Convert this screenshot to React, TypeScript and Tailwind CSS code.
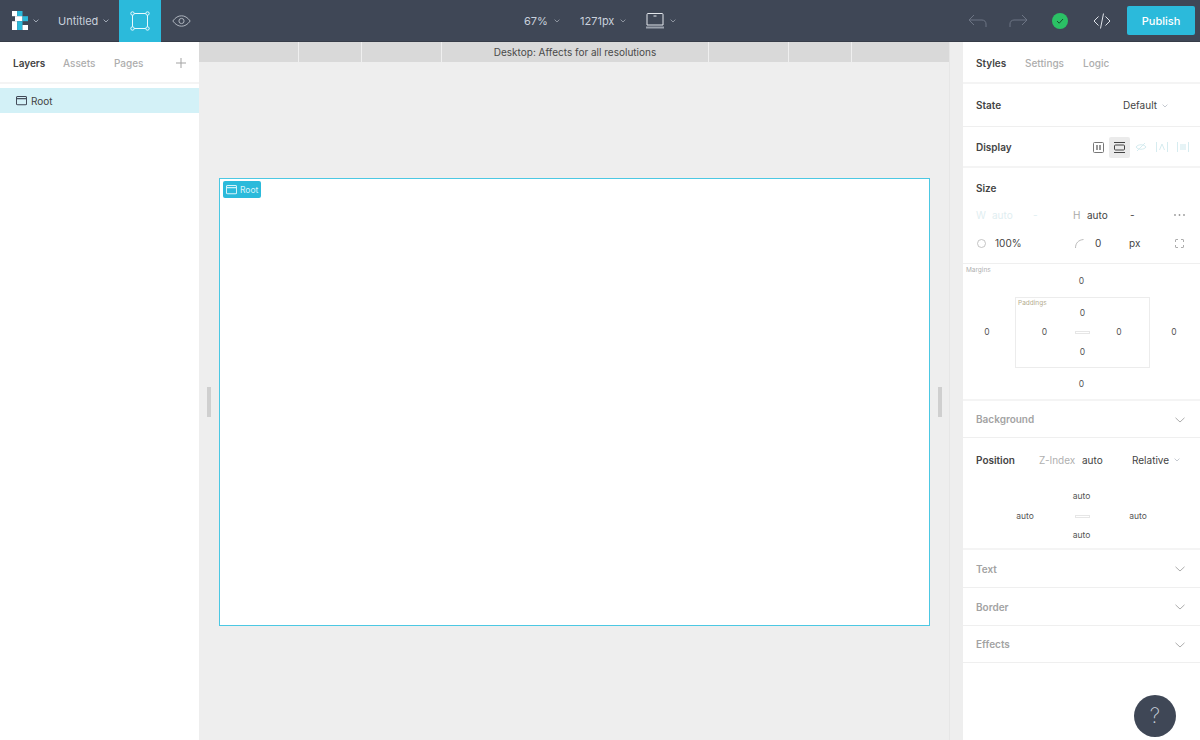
import React from "react";

const Chev = ({ c = "#aeb4bd", w = 7 }: { c?: string; w?: number }) => (
  <svg width={w} height={w * 0.6} viewBox="0 0 10 6" fill="none" stroke={c} strokeWidth="1.2"><path d="M1 1l4 4 4-4" /></svg>
);

const BigChev = () => (
  <svg width="10" height="6" viewBox="0 0 10 6" fill="none" stroke="#a3a3a3" strokeWidth="0.9"><path d="M0.5 0.8L5 5l4.5-4.2" /></svg>
);

const WinIcon = ({ c, s = 11 }: { c: string; s?: number }) => (
  <svg width={s} height={s * 0.85} viewBox="0 0 12 10" fill="none" stroke={c} strokeWidth="1.1"><rect x="0.5" y="0.5" width="11" height="9" rx="1.2" /><path d="M0.5 2.8h11" strokeWidth="1.3" /></svg>
);

const Logo = () => (
  <svg width="16" height="19" viewBox="0 0 16 19">
    <rect x="0" y="0" width="5.2" height="5.2" fill="#fff" />
    <rect x="5.200" y="0" width="5.300" height="5.200" fill="#2bbadb" />
    <rect x="3" y="5.200" width="7.500" height="5" fill="#fff" />
    <rect x="10.500" y="5.200" width="5.500" height="5" fill="#2bbadb" />
    <rect x="0" y="10.200" width="5.200" height="8.800" fill="#fff" />
    <rect x="5.200" y="10.200" width="5.300" height="8.800" fill="#2bbadb" />
    <rect x="10.500" y="14" width="5.500" height="5" fill="#fff" />
  </svg>
);

const Section = ({ title, h }: { title: string; h: string }) => (
  <div className={`flex shrink-0 items-center justify-between border-b border-[#efefef] pl-[13px] pr-[15px] pt-[1px] ${h}`}>
    <span className="text-[10px] font-semibold text-[#a3a3a3]">{title}</span>
    <BigChev />
  </div>
);

const Slot = () => <div className="h-[3px] w-[15px] border border-[#e6e6e6]" />;

export default function App() {
  return (
    <div className="flex h-[740px] w-[1200px] flex-col overflow-hidden bg-white font-['Inter',sans-serif] text-[#444]">
      <header className="flex h-[42px] shrink-0 items-center border-b border-[#363c48] bg-[#3f4756] text-[#c9d1dc]">
        <div className="flex w-[58px] items-center pl-[12px]">
          <Logo />
          <span className="ml-[5px]"><Chev c="#c9d1dc" w={6} /></span>
        </div>
        <div className="flex w-[61px] items-center pt-[1px] text-[11px]">
          <span>Untitled</span>
          <span className="ml-[5px]"><Chev c="#c9d1dc" w={6} /></span>
        </div>
        <div className="flex h-[42px] w-[42px] items-center justify-center bg-[#2bbadb]">
          <svg width="20" height="20" viewBox="0 0 20 20" fill="none" stroke="#e8fafe" strokeWidth="1">
            <rect x="2.5" y="2.5" width="15" height="15" />
            <circle cx="2.5" cy="2.5" r="1.7" fill="#2bbadb" />
            <circle cx="17.5" cy="2.5" r="1.7" fill="#2bbadb" />
            <circle cx="2.5" cy="17.5" r="1.7" fill="#2bbadb" />
            <circle cx="17.5" cy="17.5" r="1.7" fill="#2bbadb" />
          </svg>
        </div>
        <div className="ml-[11px] flex w-[19px] items-center justify-center">
          <svg width="19" height="12" viewBox="0 0 19 12" fill="none" stroke="#aeb4bd" strokeWidth="1">
            <path d="M0.8 6C3.5 2.4 6.3 0.8 9.500 0.8S15.500 2.400 18.200 6C15.500 9.600 12.700 11.200 9.500 11.200S3.500 9.600 0.800 6Z" />
            <circle cx="9.500" cy="6" r="2.600" />
          </svg>
        </div>
        <div className="ml-[333px] flex w-[56px] items-center pt-[1px] text-[11px]">
          <span>67%</span>
          <span className="ml-[6px]"><Chev c="#aeb4bd" w={6} /></span>
        </div>
        <div className="flex w-[65px] items-center pt-[1px] text-[11px]">
          <span>1271px</span>
          <span className="ml-[6px]"><Chev c="#aeb4bd" w={6} /></span>
        </div>
        <div className="flex items-center">
          <svg width="20" height="16" viewBox="0 0 20 16" fill="none" stroke="#e3e7ec" strokeWidth="1">
            <path d="M2 12V1.500a1 1 0 0 1 1-1h14a1 1 0 0 1 1 1V12Z" />
            <path d="M8.500 3h3" />
            <path d="M1 14.500h18" strokeWidth="2" stroke="#9aa1ac" />
          </svg>
          <span className="ml-[5px]"><Chev c="#aeb4bd" w={6} /></span>
        </div>
        <div className="ml-[292px] flex items-center">
          <svg width="19" height="14" viewBox="0 0 19 14" fill="none" stroke="#6d7584" strokeWidth="1">
            <path d="M6 1L1 6l5 5" /><path d="M1 6h13c2.500 0 4 1.800 4 4v3" />
          </svg>
          <svg className="ml-[22px]" width="19" height="14" viewBox="0 0 19 14" fill="none" stroke="#6d7584" strokeWidth="1">
            <path d="M13 1l5 5-5 5" /><path d="M18 6H5C2.500 6 1 7.800 1 10v3" />
          </svg>
          <svg className="ml-[24px]" width="16" height="16" viewBox="0 0 16 16">
            <circle cx="8" cy="8" r="8" fill="#2bc165" />
            <path d="M5 8l2.200 2.200L11 6" fill="none" stroke="#16502f" strokeWidth="1" />
          </svg>
          <svg className="ml-[25px]" width="18" height="18" viewBox="0 0 18 18" fill="none" stroke="#dfe3e9" strokeWidth="1">
            <path d="M5.500 4.500L1 9l4.500 4.500" /><path d="M12.500 4.500L17 9l-4.500 4.500" /><path d="M10.500 1.500L7.500 16.500" />
          </svg>
          <button className="ml-[16px] h-[29px] w-[68px] rounded-[2px] bg-[#2bbadb] pt-[1px] text-[11px] font-medium text-white">Publish</button>
        </div>
      </header>

      <div className="flex min-h-0 flex-1">
        <aside className="flex w-[199px] shrink-0 flex-col bg-white">
          <div className="flex h-[42px] items-center justify-between border-b-2 border-[#f4f4f4] pl-[13px] pr-[13px] pt-[2px]">
            <div className="flex items-center text-[10px] font-medium text-[#adadad]">
              <span className="w-[50px] font-semibold text-[#444]">Layers</span>
              <span className="w-[51px]">Assets</span>
              <span>Pages</span>
            </div>
            <svg width="10" height="10" viewBox="0 0 10 10" stroke="#a3a3a3" strokeWidth="1"><path d="M5 0v10M0 5h10" /></svg>
          </div>
          <div className="mt-[4px] flex h-[25px] items-center gap-[4px] bg-[#d3f1f7] pl-[16px] pt-[1px] text-[10px] text-[#444]">
            <WinIcon c="#3f4756" />
            <span>Root</span>
          </div>
        </aside>

        <main className="flex w-[751px] shrink-0 flex-col border-r border-[#e6e6e6] bg-[#eeeeee]">
          <div className="flex h-[20px] shrink-0 bg-[#d9d9d9] text-center text-[10px] leading-[21px] text-[#4a4a4a]">
            <div className="w-[100px] border-r border-[#efefef]" />
            <div className="w-[63px] border-r border-[#efefef]" />
            <div className="w-[80px] border-r border-[#efefef]" />
            <div className="w-[267px] border-r border-[#efefef]">Desktop: Affects for all resolutions</div>
            <div className="w-[80px] border-r border-[#efefef]" />
            <div className="w-[63px] border-r border-[#efefef]" />
            <div className="flex-1" />
          </div>
          <div className="mt-[116px] flex items-center">
            <div className="flex w-[20px] justify-center">
              <div className="h-[30px] w-[4px] bg-[#cfcfcf]" />
            </div>
            <div className="h-[448px] w-[711px] border border-[#4cc8e3] bg-white pl-[3px] pt-[2px]">
              <div className="flex h-[17px] w-[38px] items-center gap-[3px] rounded-[2px] bg-[#2bbadb] pl-[3px] pt-[1px] text-[8.500px] text-[#d8f4fa]">
                <WinIcon c="#d8f4fa" />
                <span>Root</span>
              </div>
            </div>
            <div className="flex w-[19px] justify-center">
              <div className="h-[30px] w-[4px] bg-[#cfcfcf]" />
            </div>
          </div>
        </main>

        <div className="w-[13px] shrink-0 bg-[#eeeeee]" />

        <aside className="relative flex w-[237px] shrink-0 flex-col bg-white">
          <div className="flex h-[42px] shrink-0 items-center border-b-2 border-[#f4f4f4] pl-[13px] pt-[2px] text-[10px] font-medium text-[#adadad]">
            <span className="w-[49px] font-semibold text-[#444]">Styles</span>
            <span className="w-[58px]">Settings</span>
            <span>Logic</span>
          </div>
          <div className="flex h-[43px] shrink-0 items-center justify-between border-b border-[#efefef] pl-[13px] pr-[32px] pt-[1px]">
            <span className="text-[10px] font-semibold">State</span>
            <span className="flex items-center gap-[5px] text-[10px]">Default <Chev w={6} /></span>
          </div>
          <div className="flex h-[41px] shrink-0 items-center justify-between border-b-2 border-[#f4f4f4] pl-[13px] pr-[11px] pt-[1px]">
            <span className="text-[10px] font-semibold">Display</span>
            <div className="flex items-center">
              <svg width="11" height="11" viewBox="0 0 11 11" fill="none" stroke="#777"><rect x="0.500" y="0.500" width="10" height="10" rx="1" /><path d="M4 3v5M7 3v5" strokeWidth="1.500" /></svg>
              <div className="ml-[5px] flex h-[21px] w-[21px] items-center justify-center rounded-[2px] bg-[#ebebeb]">
                <svg width="13" height="11" viewBox="0 0 13 11" fill="none" stroke="#444"><path d="M1 0.500h11M1 10.500h11" /><rect x="1.500" y="3" width="10" height="5" rx="1" /></svg>
              </div>
              <svg className="ml-[5px]" width="12" height="10" viewBox="0 0 12 10" fill="none" stroke="#d6ecf0"><path d="M1 5c2-3 8-3 10 0-2 3-8 3-10 0ZM10 1L2 9" /></svg>
              <svg className="ml-[9px]" width="12" height="10" viewBox="0 0 12 10" fill="none" stroke="#d6ecf0"><path d="M0.500 0v10M11.500 0v10M3.500 8L6 2l2.500 6" /></svg>
              <svg className="ml-[9px]" width="12" height="10" viewBox="0 0 12 10" fill="none" stroke="#d6ecf0"><path d="M0.500 0v10M11.500 0v10" /><path d="M4 2v6M6 2v6M8 2v6" strokeWidth="1.200" /></svg>
            </div>
          </div>
          <div className="flex h-[96px] shrink-0 flex-col border-b border-[#efefef] pl-[13px] pt-[13px] text-[10px]">
            <span className="h-[14px] font-semibold leading-[14px]">Size</span>
            <div className="mt-[13px] flex h-[14px] items-center">
              <span className="w-[16px] text-[#dfeef1]">W</span>
              <span className="w-[41px] text-[#dfeef1]">auto</span>
              <span className="w-[40px] text-[#dfeef1]">-</span>
              <span className="w-[14px] text-[#aaa]">H</span>
              <span className="w-[43px]">auto</span>
              <span className="w-[44px]">-</span>
              <svg width="11" height="2" viewBox="0 0 11 2" fill="#999"><circle cx="1" cy="1" r="0.900" /><circle cx="5.500" cy="1" r="0.900" /><circle cx="10" cy="1" r="0.900" /></svg>
            </div>
            <div className="mt-[14px] flex h-[14px] items-center">
              <span className="flex w-[19px] pl-[1px]">
                <svg width="9" height="9" viewBox="0 0 9 9" fill="none" stroke="#b5b5b5" strokeWidth="0.800"><circle cx="4.500" cy="4.500" r="4" /></svg>
              </span>
              <span className="w-[78px]">100%</span>
              <span className="flex w-[22px] pl-[2px]">
                <svg width="9" height="9" viewBox="0 0 9 9" fill="none" stroke="#aaa" strokeWidth="0.800"><path d="M0.500 9C0.500 4 3.500 1 8.500 0.500" /></svg>
              </span>
              <span className="w-[34px]">0</span>
              <span className="w-[46px]">px</span>
              <svg width="9" height="9" viewBox="0 0 9 9" fill="none" stroke="#999" strokeWidth="0.800"><path d="M0.500 3V1a.5.5 0 0 1 .5-.5h2M6 .5h2a.5.5 0 0 1 .5.5v2M8.500 6v2a.5.5 0 0 1-.5.500H6M3 8.500H1A.5.5 0 0 1 .5 8V6" /></svg>
            </div>
          </div>
          <div className="flex h-[137px] shrink-0 flex-col border-b-2 border-[#f4f4f4] text-[8.500px] text-[#555]">
            <div className="h-[11px] pl-[3px] text-[6.500px] leading-[12px] text-[#b0b0b0]">Margins</div>
            <div className="h-[12px] text-center leading-[12px]">0</div>
            <div className="mt-[10px] flex items-center">
              <div className="w-[52px] pr-[4px] text-center">0</div>
              <div className="h-[71px] w-[135px] border border-[#ececec]">
                <div className="h-[9px] pl-[2px] text-[6.500px] leading-[11px] text-[#b5ad8f]">Paddings</div>
                <div className="h-[12px] text-center leading-[12px]">0</div>
                <div className="mt-[7px] flex h-[12px] items-center leading-[12px]">
                  <div className="w-[57px] text-center">0</div>
                  <div className="w-[19px] pl-[2px]"><Slot /></div>
                  <div className="w-[54px] text-center">0</div>
                </div>
                <div className="mt-[8px] h-[12px] text-center leading-[12px]">0</div>
              </div>
              <div className="w-[50px] pr-[2px] text-center">0</div>
            </div>
            <div className="mt-[10px] h-[12px] text-center leading-[12px]">0</div>
          </div>
          <Section title="Background" h="h-[37px]" />
          <div className="flex h-[112px] shrink-0 flex-col border-b-2 border-[#f4f4f4] pl-[13px] pt-[15px]">
            <div className="flex h-[14px] items-center text-[10px]">
              <span className="w-[63px] font-semibold">Position</span>
              <span className="w-[43px] text-[#b0b0b0]">Z-Index</span>
              <span className="w-[50px]">auto</span>
              <span className="flex items-center gap-[5px]">Relative <Chev w={6} /></span>
            </div>
            <div className="-ml-[13px] mt-[23px] flex flex-col text-[8.500px] leading-[12px] text-[#555]">
              <div className="h-[12px] text-center">auto</div>
              <div className="mt-[8px] flex h-[12px] items-center">
                <div className="w-[112px] pl-[12px] text-center">auto</div>
                <div className="w-[15px]"><Slot /></div>
                <div className="w-[110px] pr-[14px] text-center">auto</div>
              </div>
              <div className="mt-[7px] h-[12px] text-center">auto</div>
            </div>
          </div>
          <Section title="Text" h="h-[38px]" />
          <Section title="Border" h="h-[38px]" />
          <Section title="Effects" h="h-[37px]" />
          <button className="absolute bottom-[3px] right-[24px] flex h-[42px] w-[42px] items-center justify-center rounded-full bg-[#3f4756] text-[21px] font-extralight text-[#c9d1dc]">?</button>
        </aside>
      </div>
    </div>
  );
}
